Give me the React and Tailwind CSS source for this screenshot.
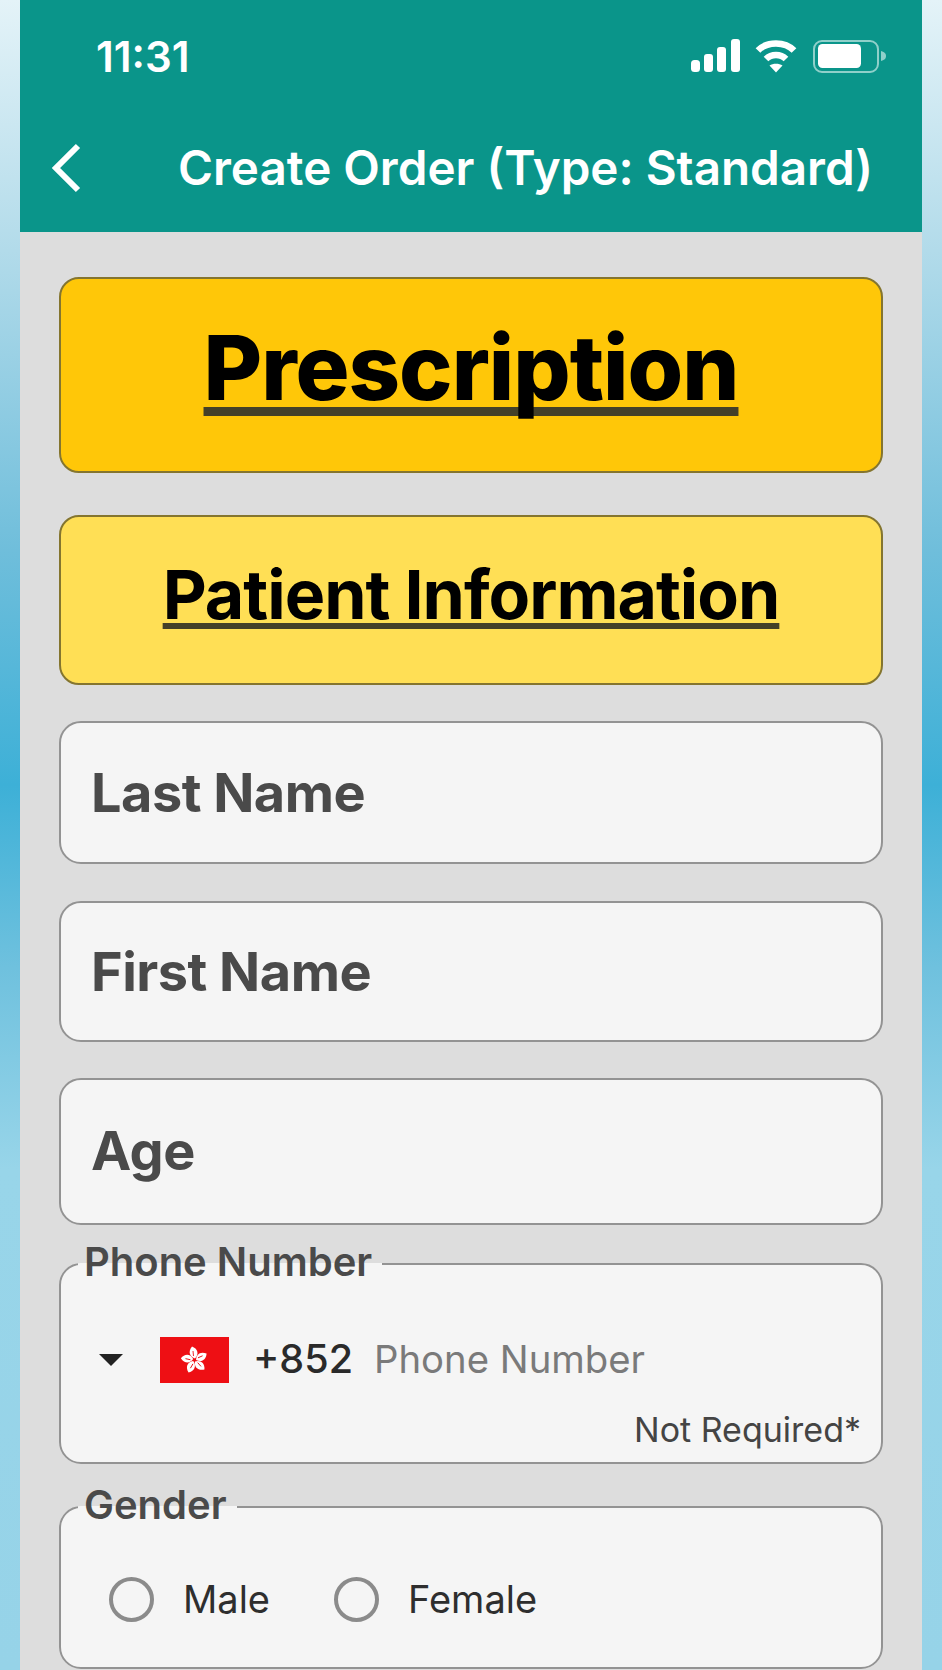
import React from 'react'

const font = "font-['Inter','Liberation_Sans',sans-serif]"

function StatusIcons() {
  return (
    <svg width="196" height="36" viewBox="0 0 196 36" fill="none">
      {/* signal */}
      <rect x="0" y="21" width="9" height="12" rx="3.5" fill="#fff" />
      <rect x="13" y="15" width="9" height="18" rx="3" fill="#fff" />
      <rect x="26" y="8" width="9" height="25" rx="3" fill="#fff" />
      <rect x="40" y="0" width="9" height="33" rx="3" fill="#fff" />
      {/* wifi */}
      <path d="M67 11.5 C76 2 94 2 103 11.5" stroke="#fff" strokeWidth="6.5" />
      <path d="M75 20 C80.5 14.5 89.5 14.5 95 20" stroke="#fff" strokeWidth="6.5" />
      <path d="M78.5 26.5 C82 24 88 24 91.5 26.5 L85 33.5 Z" fill="#fff" />
      {/* battery */}
      <rect x="123" y="2" width="64" height="31" rx="8" stroke="#8fd0ca" strokeWidth="2" />
      <rect x="127" y="5" width="43" height="24" rx="4.5" fill="#fff" />
      <path d="M190 12 C194 13 195 15 195 17 C195 19 194 21 190 22 Z" fill="#8fd0ca" />
    </svg>
  )
}

function Flag() {
  return (
    <svg className="ml-[37px]" width="69" height="46" viewBox="0 0 69 46">
      <rect width="69" height="46" fill="#ee0f14" />
      <g transform="translate(34.5 23)">
        {[0, 72, 144, 216, 288].map(r => (
          <g key={r} transform={`rotate(${r})`}>
            <path d="M0.5 -1.5 C-4.5 -3 -7 -8 -2.5 -13.5 C3 -11.5 5 -6 0.5 -1.5 Z" fill="#fff" />
            <path d="M-1 -4 L-1.5 -9" stroke="#ee0f14" strokeWidth="0.9" />
          </g>
        ))}
      </g>
    </svg>
  )
}

function Banner({ children, bg, className }) {
  return (
    <div className={`flex justify-center rounded-[20px] border-2 border-[#84752f] text-black ${bg} ${className}`}>
      <span className="underline [text-decoration-skip-ink:none] decoration-[#444028]">{children}</span>
    </div>
  )
}

function TextField({ label, className }) {
  return (
    <div className={`flex items-center rounded-[22px] border-2 border-[#939393] bg-[#f5f5f5] pl-[30px] text-[54px] font-bold tracking-[-0.5px] text-[#4a4a4a] ${className}`}>
      {label}
    </div>
  )
}

function Group({ legend, className, children }) {
  return (
    <fieldset className={`rounded-[22px] border-2 border-[#939393] bg-[#f5f5f5] px-[17px] ${className}`}>
      <legend className="pr-[10px] pb-[3px] pl-[6px] text-[40px] leading-[44px] font-semibold text-[#4a4a4a]">{legend}</legend>
      {children}
    </fieldset>
  )
}

function Radio({ label, className }) {
  return (
    <label className={`flex items-center ${className}`}>
      <span className="h-[45px] w-[45px] rounded-full border-[4px] border-[#8b8b8b]" />
      <span className="ml-[29px] text-[38px] text-[#2e2e2e]">{label}</span>
    </label>
  )
}

export default function App() {
  return (
    <div className={`h-[1670px] overflow-hidden bg-[linear-gradient(to_bottom,#e4f3f8_0%,#b2dbea_15%,#6fbedb_33%,#3db0d7_47%,#6fc1de_58%,#98d5e9_70%,#96d3e8_100%)] px-[20px] ${font}`}>
      <div className="flex h-full flex-col bg-[#dddddd]">
        <header className="flex h-[232px] shrink-0 flex-col bg-[#0a958a] text-white">
          <div className="flex items-center justify-between pt-[35px] pr-[35px] pl-[76px]">
            <span className="text-[42px] leading-[44px] font-semibold">11:31</span>
            <StatusIcons />
          </div>
          <div className="mt-[59px] flex items-center pr-[49px] pl-[31px]">
            <svg width="32" height="50" viewBox="0 0 32 50" fill="none">
              <path d="M27 3 L5 25 L27 47" stroke="#fff" strokeWidth="6" />
            </svg>
            <h1 className="ml-auto text-[47.6px] leading-[60px] font-semibold">Create Order (Type: Standard)</h1>
          </div>
        </header>

        <main className="flex flex-col px-[39px] pt-[45px]">
          <Banner bg="bg-[#ffc708]" className="h-[196px] pt-[37px] text-[90px] leading-[104px] font-extrabold tracking-[-1px] decoration-[4px] underline-offset-[7px]">
            Prescription
          </Banner>
          <Banner bg="bg-[#ffdf55]" className="mt-[42px] h-[170px] pt-[37px] text-[68px] leading-[80px] font-bold tracking-[-1px] decoration-[3px] underline-offset-[4px]">
            Patient Information
          </Banner>
          <TextField label="Last Name" className="mt-[36px] h-[143px]" />
          <TextField label="First Name" className="mt-[37px] h-[141px]" />
          <TextField label="Age" className="mt-[36px] h-[147px] pb-[3px]" />

          <Group legend="Phone Number" className="mt-[15px] h-[224px]">
            <div className="mt-[43px] flex items-center pl-[21px]">
              <span className="h-0 w-0 border-x-[12px] border-t-[12px] border-x-transparent border-t-[#222]" />
              <Flag />
              <span className="ml-[24px] text-[39.5px] font-medium text-[#2a2a2a]">+852</span>
              <span className="ml-[21px] text-[38.3px] text-[#7a7a7a]">Phone Number</span>
            </div>
            <div className="mt-[19px] pr-[3px] text-right text-[34px] leading-[44px] text-[#444]">Not Required*</div>
          </Group>

          <Group legend="Gender" className="mt-[19px] h-[186px]">
            <div className="mt-[41px] flex items-center pl-[31px]">
              <Radio label="Male" />
              <Radio label="Female" className="ml-[64px]" />
            </div>
          </Group>
        </main>
      </div>
    </div>
  )
}
